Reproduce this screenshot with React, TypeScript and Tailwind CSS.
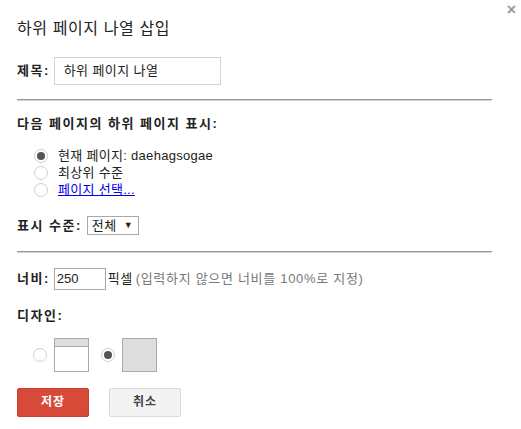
import { FC } from "react";

const font = {
  fontFamily: '"Liberation Sans", "Noto Sans CJK KR", sans-serif',
};

const Radio: FC<{ checked?: boolean }> = ({ checked = false }) => (
  <span className="flex h-[14px] w-[14px] shrink-0 items-center justify-center rounded-full border border-[#d0d0d0] bg-white">
    {checked && <span className="h-[8px] w-[8px] rounded-full bg-[#555]" />}
  </span>
);

const Divider: FC = () => (
  <div className="w-[475px]">
    <div className="h-px bg-[#999]" />
    <div className="h-px bg-[#d4d4d4]" />
  </div>
);

export default function App() {
  return (
    <div
      className="relative h-[429px] w-[521px] bg-white px-[17px] pt-[20px] text-[13px] text-[#222]"
      style={font}
    >
      <button className="absolute right-[5px] top-[2px] text-[16px] leading-[16px] font-bold text-[#999]">
        ×
      </button>

      <div className="text-[16px] leading-[18px] tracking-[0.6px]">
        하위 페이지 나열 삽입
      </div>

      <div className="mt-[19px] flex items-center gap-[4px]">
        <span className="font-bold tracking-[1.5px]">제목:</span>
        <div className="flex h-[28px] w-[167px] items-center border border-[#d3d3d3] px-[9px] text-[13px] tracking-[0.4px]">
          하위 페이지 나열
        </div>
      </div>

      <div className="mt-[14px]">
        <Divider />
      </div>

      <div className="mt-[15px] leading-[16px] font-bold tracking-[1.5px]">
        다음 페이지의 하위 페이지 표시:
      </div>

      <div className="mt-[15px] flex flex-col pl-[17px] tracking-[0.3px]">
        <div className="flex h-[17px] items-center gap-[10px]">
          <Radio checked />
          <span>현재 페이지: daehagsogae</span>
        </div>
        <div className="flex h-[17px] items-center gap-[10px]">
          <Radio />
          <span>최상위 수준</span>
        </div>
        <div className="flex h-[17px] items-center gap-[10px]">
          <Radio />
          <span className="text-[#0000ee] underline">페이지 선택...</span>
        </div>
      </div>

      <div className="mt-[18px] flex items-center gap-[5px]">
        <span className="font-bold tracking-[1.5px]">표시 수준:</span>
        <div className="flex h-[19px] w-[52px] items-center justify-between border border-[#a9a9a9] pl-[4px] pr-[5px]">
          <span className="tracking-[0.5px]">전체</span>
          <span className="text-[9px]">▼</span>
        </div>
      </div>

      <div className="mt-[15px]">
        <Divider />
      </div>

      <div className="mt-[15px] flex items-center">
        <span className="font-bold tracking-[1.5px]">너비:</span>
        <div className="ml-[4px] flex h-[22px] w-[52px] items-center border border-[#a9a9a9] pl-[2px]">
          250
        </div>
        <span className="ml-[2px] tracking-[0.5px]">픽셀</span>
        <span className="ml-[3px] tracking-[0.7px] text-[#777]">
          (입력하지 않으면 너비를 100%로 지정)
        </span>
      </div>

      <div className="mt-[18px] leading-[16px] font-bold tracking-[1.5px]">
        디자인:
      </div>

      <div className="mt-[14px] flex items-center pl-[16px]">
        <Radio />
        <div className="ml-[7px] flex h-[34px] w-[35px] flex-col border border-[#aaa] bg-white">
          <div className="h-[8px] border-b border-[#aaa] bg-[#ddd]" />
        </div>
        <div className="ml-[12px]">
          <Radio checked />
        </div>
        <div className="ml-[7px] h-[34px] w-[35px] border border-[#aaa] bg-[#ddd]" />
      </div>

      <div className="mt-[16px] flex gap-[20px]">
        <button className="flex h-[29px] w-[72px] items-center justify-center rounded-[2px] border border-[#c6412f] bg-[#d84a38] text-[12px] font-bold tracking-[1px] text-white">
          저장
        </button>
        <button className="flex h-[29px] w-[72px] items-center justify-center rounded-[2px] border border-[#dcdcdc] bg-[#f3f3f3] text-[12px] font-bold tracking-[1px] text-[#444]">
          취소
        </button>
      </div>
    </div>
  );
}
